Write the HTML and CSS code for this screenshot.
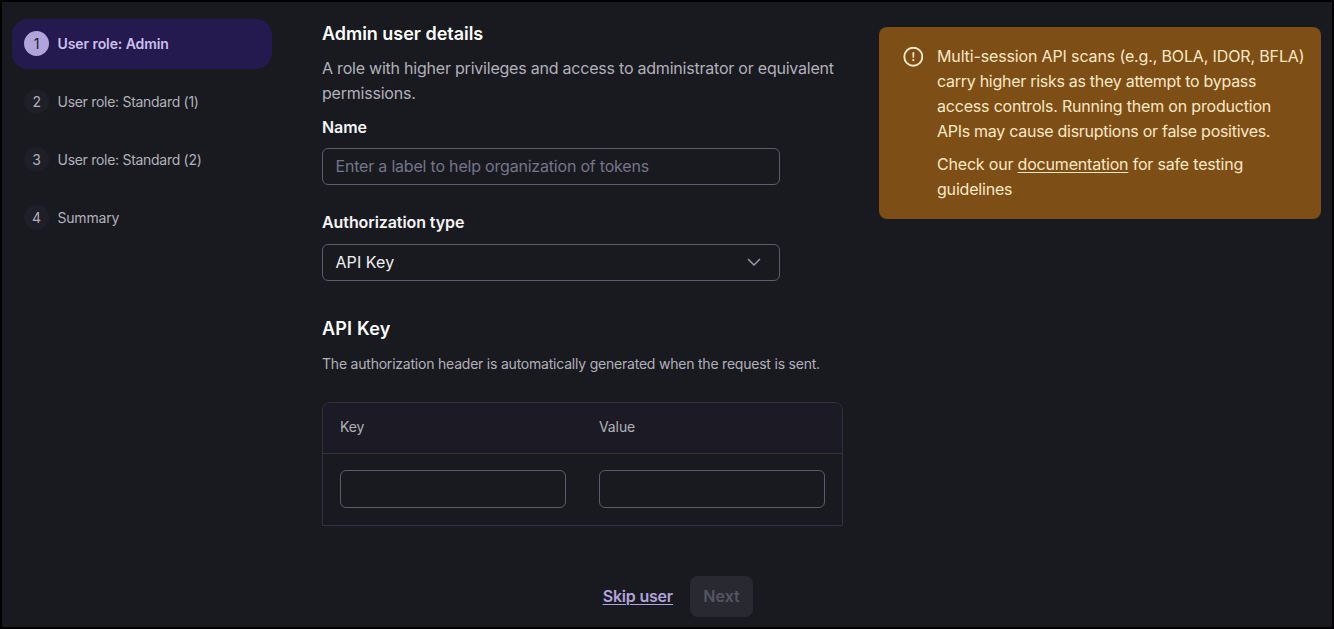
FILE: index.html
```html
<!DOCTYPE html>
<html lang="en">
<head>
<meta charset="UTF-8" />
<meta name="viewport" content="width=device-width, initial-scale=1"/>
<title>Admin user details</title>
<link rel="stylesheet" href="styles.css">
</head>
<body>
<div class="app">
  <nav class="steps" aria-label="Steps">
    <div class="step active"><span class="num">1</span><span class="step-label">User role: Admin</span></div>
    <div class="step"><span class="num">2</span><span class="step-label">User role: Standard (1)</span></div>
    <div class="step"><span class="num">3</span><span class="step-label">User role: Standard (2)</span></div>
    <div class="step"><span class="num">4</span><span class="step-label summary">Summary</span></div>
  </nav>

  <main class="content">
    <h1>Admin user details</h1>
    <p class="intro">A role with higher privileges and access to administrator or equivalent<br>permissions.</p>

    <label class="name-label" for="name">Name</label>
    <input class="field" id="name" type="text" placeholder="Enter a label to help organization of tokens">

    <label class="auth-label" for="auth">Authorization type</label>
    <button class="field select" id="auth" type="button">
      <span>API Key</span>
      <svg width="14" height="8" viewBox="0 0 14 8" aria-hidden="true"><path d="M1 1l6 6 6-6" fill="none" stroke="currentColor" stroke-width="1.4"/></svg>
    </button>

    <h2>API Key</h2>
    <p class="hint">The authorization header is automatically generated when the request is sent.</p>

    <div class="table">
      <div class="row head"><span>Key</span><span>Value</span></div>
      <div class="row">
        <input class="cell" type="text" aria-label="Key">
        <input class="cell" type="text" aria-label="Value">
      </div>
    </div>

    <div class="actions">
      <a class="skip" href="#">Skip user</a>
      <button class="next" type="button" disabled>Next</button>
    </div>
  </main>

  <aside class="alert" role="alert">
    <svg class="alert-icon" width="20" height="20" viewBox="0 0 20 20" aria-hidden="true">
      <circle cx="10.3" cy="9.7" r="9" fill="none" stroke="currentColor" stroke-width="1.9"/>
      <path d="M9.4 5.2h1.9l-.2 5.6h-1.5z" fill="currentColor"/>
      <circle cx="10.35" cy="13.1" r="1.1" fill="currentColor"/>
    </svg>
    <div class="alert-text">
      <p><span class="wide">Multi-session API scans (e.g., BOLA, IDOR, BFLA)</span><br>carry higher risks as they attempt to bypass<br><span class="mid">access controls. Running them on production</span><br>APIs may cause disruptions or false positives.</p>
      <p class="mid">Check our <a href="#">documentation</a> for safe testing<br>guidelines</p>
    </div>
  </aside>
</div>
</body>
</html>
```
FILE: styles.css
```css
* {
  box-sizing: border-box;
}
body {
  margin: 0;
  background: #191a1f;
  color: #b1b1ba;
  font-family: Inter, "Liberation Sans", sans-serif;
  font-size: 16px;
  line-height: 25px;
}
h1, h2, p {
  margin: 0;
}
.app {
  display: grid;
  grid-template-columns: 260px 521px 442px;
  justify-content: start;
  align-items: start;
  height: 629px;
  padding-left: 10px;
  border: 2px solid #000;
  overflow: hidden;
}

/* Sidebar */
.steps {
  display: flex;
  flex-direction: column;
  gap: 8px;
  padding-top: 17px;
}
.step {
  display: flex;
  align-items: center;
  gap: 8.5px;
  height: 50px;
  padding: 0 12px 1px;
  border-radius: 16px;
  font-size: 14px;
  letter-spacing: -0.29px;
  white-space: nowrap;
}
.step.active {
  background: #251a50;
  color: #cbc0eb;
  font-weight: 600;
  letter-spacing: -0.08px;
}
.summary {
  letter-spacing: -0.2px;
}
.num {
  display: flex;
  align-items: center;
  justify-content: center;
  width: 25px;
  height: 25px;
  border-radius: 50%;
  background: #1f1f28;
  font-weight: 400;
}
.active .num {
  background: #b1a3dc;
  color: #1a1b1f;
}

/* Form */
.content {
  margin-left: 50px;
  width: 521px;
  padding-top: 19px;
  white-space: nowrap;
}
h1, h2 {
  color: #fff;
  font-size: 18px;
  font-weight: 600;
  line-height: 25px;
  letter-spacing: -0.03px;
}
.intro {
  margin-top: 10px;
  letter-spacing: -0.22px;
}
label {
  display: block;
  color: #f5f5f8;
  font-weight: 600;
  letter-spacing: -0.08px;
}
.name-label {
  margin: 9px 0 8px;
}
.auth-label {
  margin: 25px 0 9px;
}
.field, .cell {
  display: block;
  background: transparent;
  border: 1px solid #5b5b70;
  border-radius: 6px;
  font: inherit;
  letter-spacing: -0.2px;
  color: #f0f0f4;
  outline: none;
}
.field {
  width: 458px;
  height: 37px;
  padding: 0 12.5px 1px;
}
.field::placeholder {
  color: #74748a;
  opacity: 1;
}
.select {
  display: flex;
  align-items: center;
  justify-content: space-between;
  padding-right: 18px;
  letter-spacing: 0.08px;
}
.select svg {
  color: #a0a0ad;
}
h2 {
  margin-top: 35px;
  letter-spacing: 0.2px;
}
.hint {
  margin-top: 10px;
  font-size: 14px;
  letter-spacing: -0.215px;
}
.table {
  margin-top: 26px;
  height: 124px;
  border: 1px solid #32323e;
  border-radius: 8px 8px 0 0;
  overflow: hidden;
}
.row {
  display: grid;
  grid-template-columns: 226px 226px;
  column-gap: 33px;
  padding: 16px 17px;
}
.head {
  height: 51px;
  padding-top: 11px;
  background: #1c1b25;
  border-bottom: 1px solid #32323e;
  font-size: 14px;
  letter-spacing: -0.1px;
}
.cell {
  width: 226px;
  height: 38px;
  padding: 0 12px;
}
.actions {
  display: flex;
  align-items: center;
  justify-content: flex-end;
  gap: 17px;
  margin-top: 50px;
  padding-right: 90px;
}
.skip {
  color: #b1a3dc;
  font-weight: 600;
  letter-spacing: -0.2px;
  text-underline-offset: 2px;
  text-decoration-thickness: 1px;
}
.next {
  width: 63px;
  height: 41px;
  padding: 0;
  border: 0;
  border-radius: 8px;
  background: #292932;
  color: #555562;
  font: inherit;
  font-weight: 600;
}

/* Warning */
.alert {
  display: flex;
  gap: 14px;
  width: 442px;
  height: 192px;
  margin: 25px 0 0 86px;
  padding: 17px 12px 0 24px;
  border-radius: 8px;
  background: #7d4f16;
  color: #fce7c5;
  letter-spacing: -0.28px;
  white-space: nowrap;
}
.alert-icon {
  flex: none;
  margin-top: 3px;
}
.alert-text p + p {
  margin-top: 8px;
}
.alert a {
  color: inherit;
  text-underline-offset: 2px;
  text-decoration-thickness: 1px;
}
.wide {
  letter-spacing: -0.14px;
}
.mid {
  letter-spacing: -0.19px;
}
```
